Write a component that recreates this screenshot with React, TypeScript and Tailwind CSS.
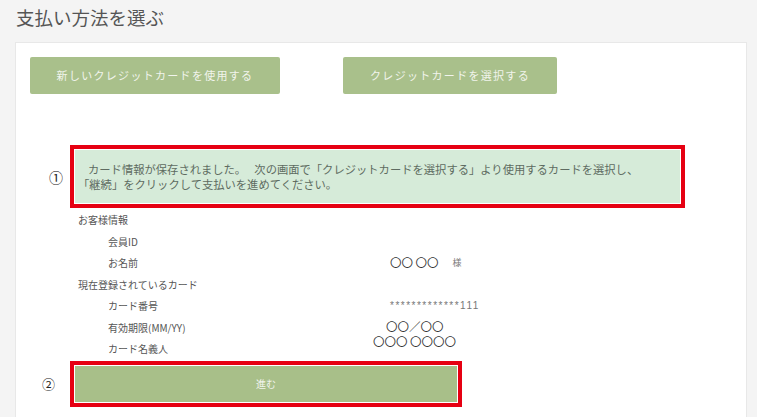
import React from "react";

export default function App() {
  return (
    <div className="w-[757px] h-[417px] overflow-hidden bg-[#f4f4f4] text-[#555] [font-family:'Noto_Sans_CJK_JP',sans-serif]">
      <h1 className="pl-[16px] pt-[5px] h-[42px] text-[18.5px] leading-[24px] text-[#555] font-normal">
        支払い方法を選ぶ
      </h1>
      <div className="ml-[15px] w-[732px] h-[400px] bg-white border border-[#e8e8e8]">
        <div className="flex pt-[14px] pl-[14px] gap-[63px]">
          <button className="w-[250px] h-[37px] bg-[#a9c08b] text-[#f1f4ec] text-[11px] tracking-[1.3px] rounded-[2px]">
            新しいクレジットカードを使用する
          </button>
          <button className="w-[214px] h-[37px] bg-[#a9c08b] text-[#f1f4ec] text-[11px] tracking-[1.3px] rounded-[2px]">
            クレジットカードを選択する
          </button>
        </div>

        <div className="mt-[51px] flex items-center">
          <span className="ml-[33px] w-[21px] text-[14px] leading-none text-[#222]">①</span>
          <div className="w-[615px] h-[63px] border-[4px] border-[#e60012] p-[1px] bg-white">
            <div className="h-full bg-[#d6ebd9] pl-[3px] flex flex-col justify-center text-[11.3px] leading-[15px] text-[#5e6b61]">
              <p className="pl-[10px] whitespace-pre">
                カード情報が保存されました。　 次の画面で「クレジットカードを選択する」より使用するカードを選択し、
              </p>
              <p>「継続」をクリックして支払いを進めてください。</p>
            </div>
          </div>
        </div>

        <div className="mt-[1px] pl-[62px] text-[10px] text-[#555]">
          <div className="h-[21.5px] flex items-center">お客様情報</div>
          <div className="h-[21.5px] flex items-center pl-[30px]">会員ID</div>
          <div className="h-[21.5px] flex items-center pl-[30px]">
            <span className="w-[264px]">お名前</span>
            <span className="ml-[18px] text-[11.5px] text-[#333]">〇〇 〇〇</span>
            <span className="ml-[14px] text-[9px] text-[#777]">様</span>
          </div>
          <div className="h-[21.5px] flex items-center">現在登録されているカード</div>
          <div className="h-[21.5px] flex items-center pl-[30px]">
            <span className="w-[264px]">カード番号</span>
            <span className="ml-[18px] text-[10px] tracking-[1.5px] text-[#777] [font-family:'Liberation_Sans',sans-serif]">
              *************111
            </span>
          </div>
          <div className="h-[21.5px] flex items-center pl-[30px]">
            <span className="w-[264px]">有効期限(MM/YY)</span>
            <span className="ml-[14px] text-[11.5px] text-[#333] -translate-y-[1px]">〇〇／〇〇</span>
          </div>
          <div className="h-[21.5px] flex items-center pl-[30px]">
            <span className="w-[264px]">カード名義人</span>
            <span className="ml-[1px] text-[11.5px] text-[#333] -translate-y-[7px]">〇〇〇 〇〇〇〇</span>
          </div>
        </div>

        <div className="mt-[1px] flex items-center">
          <span className="ml-[26px] w-[28px] text-[13px] leading-none text-[#222]">②</span>
          <div className="w-[392px] h-[46px] border-[4px] border-[#e60012] p-[1px] bg-white">
            <div className="h-full bg-[#a8bf89] flex items-center justify-center text-[10px] text-[#f1f4ec]">
              進む
            </div>
          </div>
        </div>
      </div>
    </div>
  );
}
